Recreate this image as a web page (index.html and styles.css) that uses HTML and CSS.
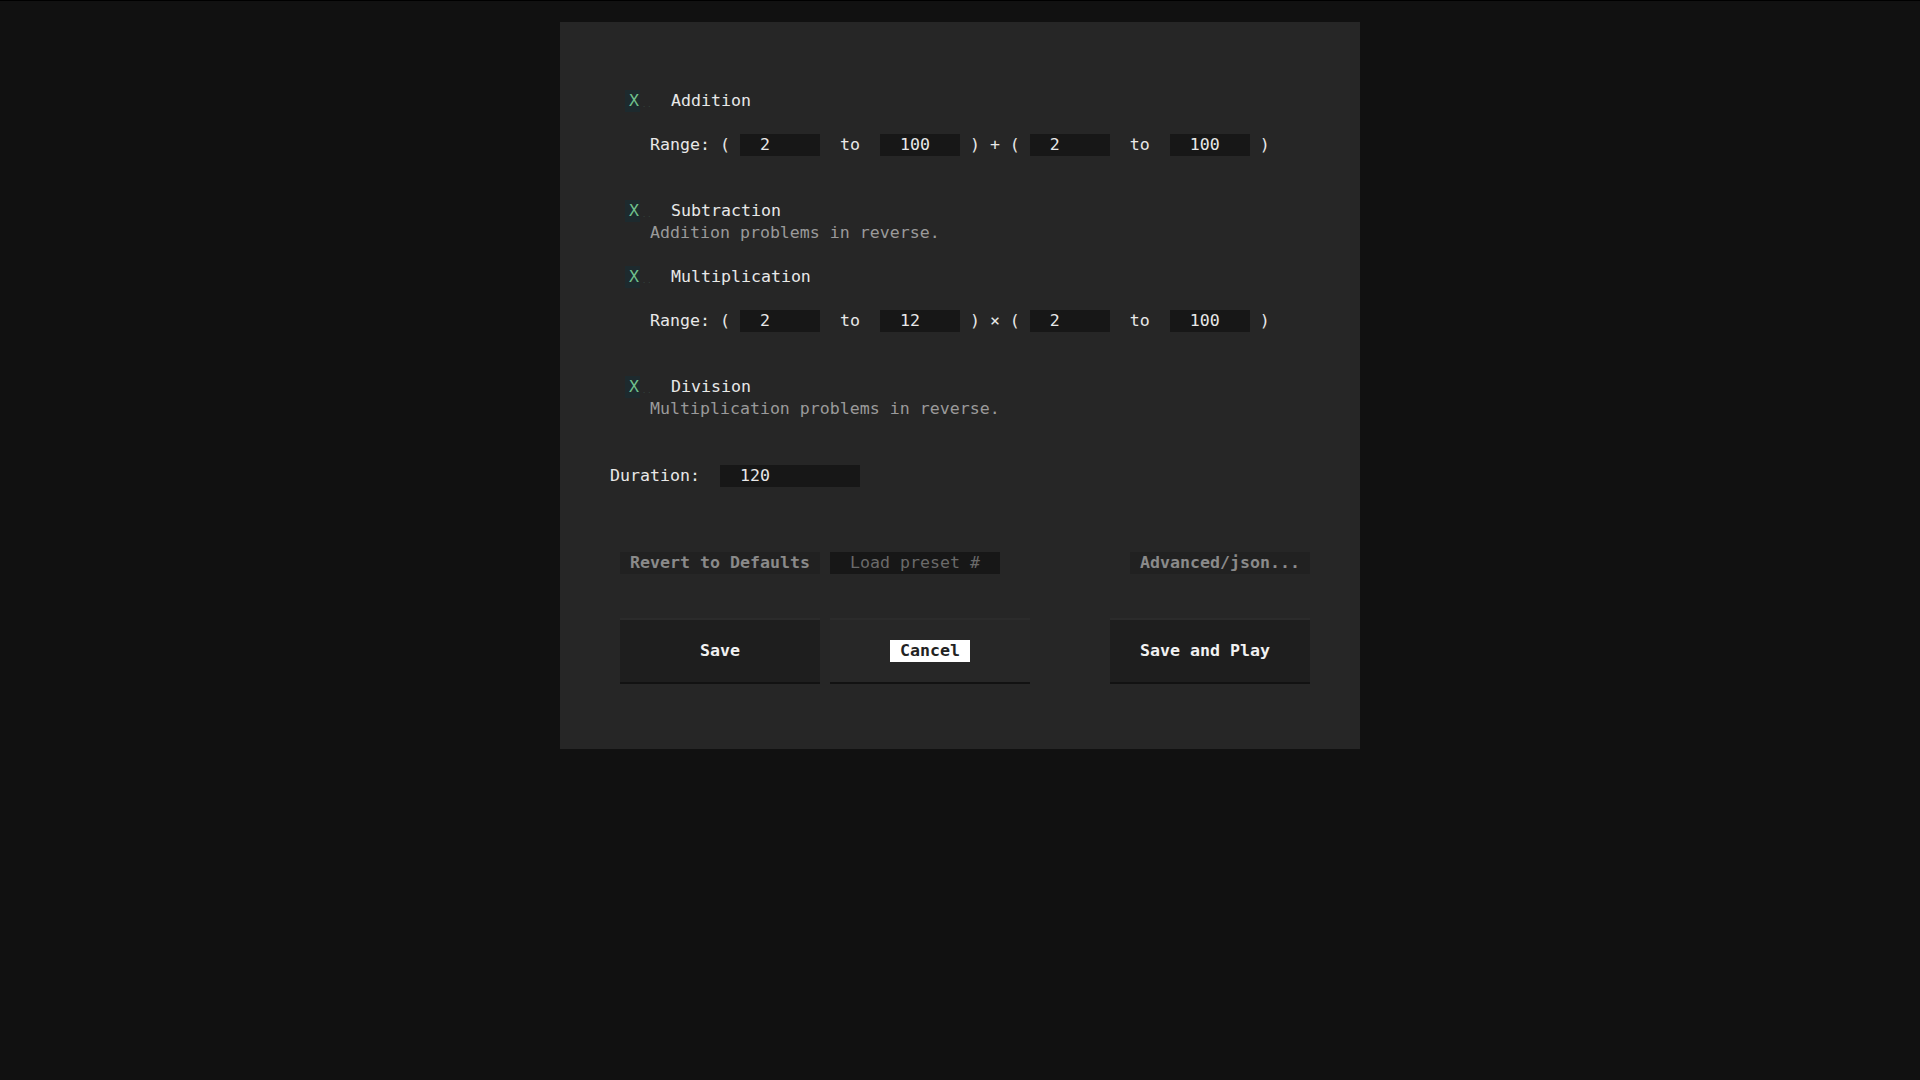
FILE: index.html
```html
<!DOCTYPE html>
<html>
<head>
  <link rel="stylesheet" href="styles.css">
</head>
<body>
  <div class="panel">
    <div class="ops">
      <div class="op">
        <div class="op-head"><span class="check">X</span><span class="dots">..</span><span class="op-name">Addition</span></div>
        <div class="range">
          <span>Range: (</span><input value="2"><span> to </span><input value="100"><span>) + (</span><input value="2"><span> to </span><input value="100"><span>)</span>
        </div>
      </div>
      <div class="op">
        <div class="op-head"><span class="check">X</span><span class="dots">..</span><span class="op-name">Subtraction</span></div>
        <div class="desc">Addition problems in reverse.</div>
      </div>
      <div class="op">
        <div class="op-head"><span class="check">X</span><span class="dots">..</span><span class="op-name">Multiplication</span></div>
        <div class="range">
          <span>Range: (</span><input value="2"><span> to </span><input value="12"><span>) × (</span><input value="2"><span> to </span><input value="100"><span>)</span>
        </div>
      </div>
      <div class="op">
        <div class="op-head"><span class="check">X</span><span class="dots">..</span><span class="op-name">Division</span></div>
        <div class="desc">Multiplication problems in reverse.</div>
      </div>
    </div>

    <div class="duration">
      <label>Duration:</label>
      <input class="dur" value="120">
    </div>

    <div class="tools">
      <button class="tool">Revert to Defaults</button>
      <input class="preset" placeholder="Load preset #">
      <button class="tool adv">Advanced/json...</button>
    </div>

    <div class="actions">
      <button class="big">Save</button>
      <button class="big cancel"><span>Cancel</span></button>
      <button class="big play">Save and Play</button>
    </div>
  </div>
</body>
</html>
```

FILE: styles.css
```css
body {
  margin: 0;
  background-color: #111111;
  border-top: 1px solid #000;
  font-family: "DejaVu Sans Mono", monospace;
  font-size: 16.6px;
  line-height: 22px;
  color: #e8e8e8;
}

.panel {
  width: 800px;
  margin: 21px auto 0;
  padding: 68px 50px 65px;
  box-sizing: border-box;
  background-color: #262626;
  display: flex;
  flex-direction: column;
}

.ops {
  display: flex;
  flex-direction: column;
  gap: 22px;
}

.op {
  display: flex;
  flex-direction: column;
}

.op-head {
  display: flex;
  align-items: center;
  height: 22px;
  padding-left: 15px;
}

.check {
  width: 15px;
  height: 22px;
  box-sizing: border-box;
  padding-left: 4px;
  background-color: #1d2a2e;
  color: #6fc08d;
}

.dots {
  width: 29px;
  align-self: flex-end;
  padding-left: 2px;
  font-size: 7px;
  line-height: 14px;
  letter-spacing: 1px;
  color: #34443f;
}

.desc {
  padding-left: 40px;
  color: #9a9a9a;
}

.range {
  display: flex;
  gap: 10px;
  margin: 22px 0;
  padding-left: 40px;
  white-space: pre;
}

input {
  font: inherit;
  width: 80px;
  height: 22px;
  padding: 0 0 0 20px;
  box-sizing: border-box;
  border: none;
  outline: none;
  background-color: #171717;
  color: #e8e8e8;
}

.duration {
  display: flex;
  gap: 20px;
  margin-top: 45px;
}

.dur {
  width: 140px;
}

.tools {
  display: flex;
  gap: 10px;
  margin-top: 65px;
  padding-left: 10px;
}

button {
  font: inherit;
  font-weight: bold;
  border: none;
  padding: 0;
  cursor: pointer;
}

.tool {
  width: 200px;
  height: 22px;
  background-color: #212121;
  color: #8a8a8a;
}

.preset {
  width: 170px;
}

.preset::placeholder {
  color: #6a6a6a;
}

.adv {
  width: 180px;
  margin-left: auto;
}

.actions {
  display: flex;
  gap: 10px;
  margin-top: 44px;
  padding-left: 10px;
}

.big {
  width: 200px;
  height: 66px;
  background-color: #1e1e1e;
  border-top: 2px solid #2b2b2b;
  border-bottom: 2px solid #121212;
  color: #f2f2f2;
}

.cancel {
  background-color: #272727;
}

.cancel span {
  display: inline-block;
  padding: 0 10px;
  background-color: #fff;
  color: #222;
}

.play {
  margin-left: auto;
  padding-right: 10px;
}
```
